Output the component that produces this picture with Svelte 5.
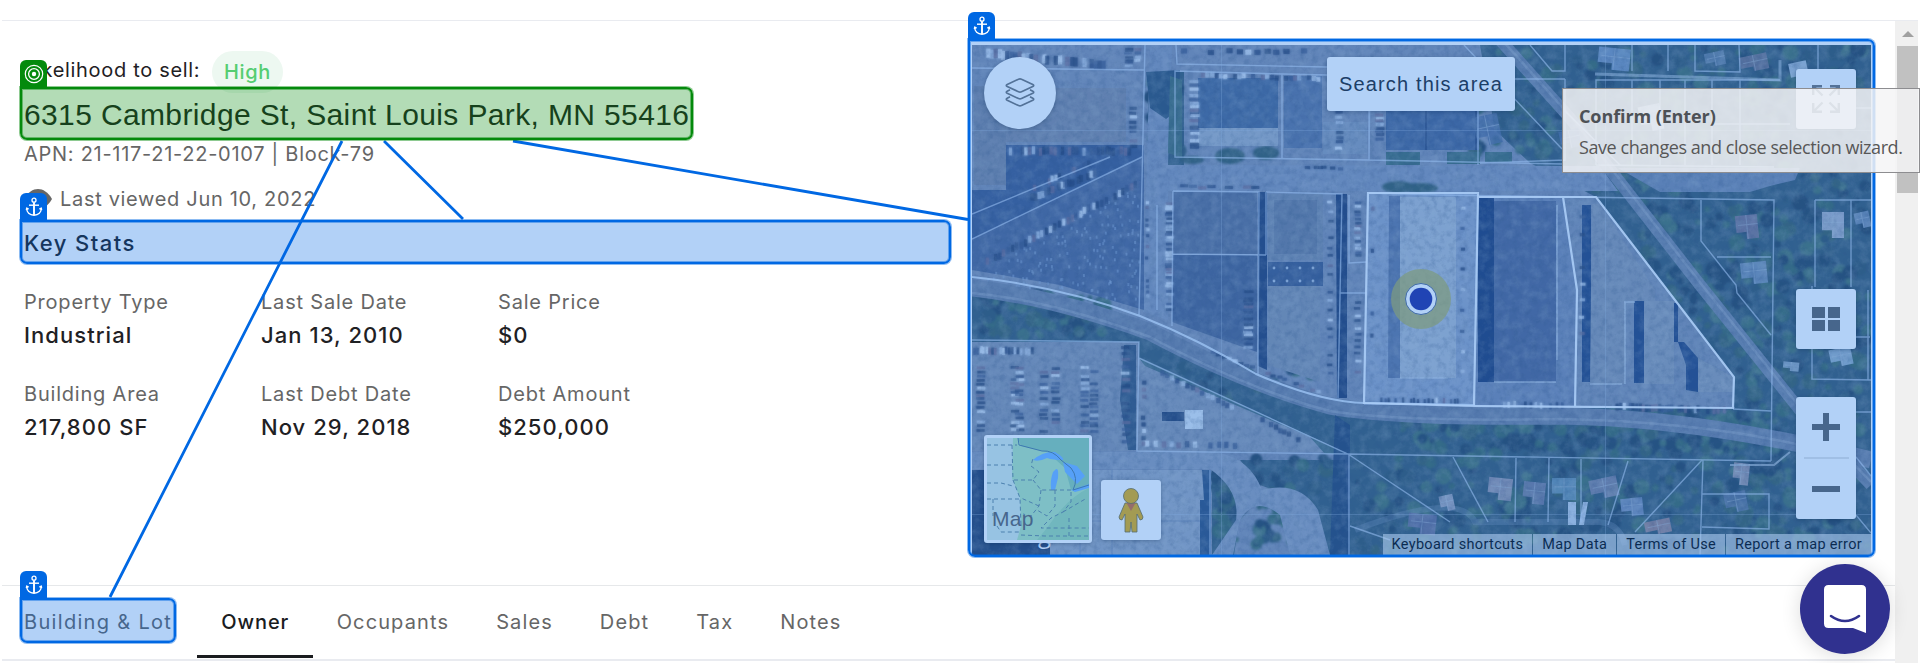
<script>
  const stats = [
    { label: 'Property Type', value: 'Industrial' },
    { label: 'Last Sale Date', value: 'Jan 13, 2010' },
    { label: 'Sale Price', value: '$0' },
    { label: 'Building Area', value: '217,800 SF' },
    { label: 'Last Debt Date', value: 'Nov 29, 2018' },
    { label: 'Debt Amount', value: '$250,000' },
  ];
  const tabs = ['Building & Lot', 'Owner', 'Occupants', 'Sales', 'Debt', 'Tax', 'Notes'];
  const credits = ['Keyboard shortcuts', 'Map Data', 'Terms of Use', 'Report a map error'];

  const selections = [
    { kind: 'target', x: 20, y: 87, w: 673, h: 53 },
    { kind: 'anchor', x: 20, y: 220, w: 931, h: 44 },
    { kind: 'anchor', x: 968, y: 39, w: 907, h: 518 },
    { kind: 'anchor', x: 20, y: 598, w: 156, h: 45 },
  ];

  // Small seeded generator so the scattered cars, trees and roofs stay put between renders.
  let seed = 7;
  const rnd = () => {
    seed = (seed * 16807) % 2147483647;
    return seed / 2147483647;
  };
  const carFill = ['#dfe6ee', '#2b3a5e', '#36446a', '#b9c4d6', '#43527a', '#2c3a5c', '#7c6680'];
  function carRow(x1, y1, x2, y2, n, w = 3, h = 6) {
    return Array.from({ length: n }, (_, i) => {
      const t = i / n;
      return {
        x: x1 + (x2 - x1) * t + rnd() * 1.5,
        y: y1 + (y2 - y1) * t + rnd() * 2,
        w, h,
        f: carFill[Math.floor(rnd() * carFill.length)],
      };
    }).filter(() => rnd() > 0.2);
  }
  const cars = [
    ...carRow(1005, 146, 1130, 146, 34, 3, 8),
    ...carRow(976, 262, 1138, 178, 38, 3, 7),
    ...carRow(1030, 193, 1095, 168, 20, 4, 7),
    ...carRow(1032, 183, 1090, 158, 16, 3, 6),
    ...carRow(1129, 105, 1129, 148, 9, 7, 3),
    ...carRow(1124, 47, 1124, 66, 7, 8, 2),
    ...carRow(1134, 47, 1134, 66, 5, 6, 3),
    ...carRow(1189, 80, 1189, 148, 20, 9, 3),
    ...carRow(1335, 105, 1335, 150, 9, 7, 3),
    ...carRow(1375, 112, 1375, 150, 11, 8, 3),
    ...carRow(1200, 72, 1320, 75, 26, 4, 5),
    ...carRow(1180, 184, 1260, 186, 9, 8, 3),
    ...carRow(1300, 164, 1350, 166, 12, 5, 3),
    ...carRow(1165, 196, 1165, 310, 40, 7, 2.5),
    ...carRow(1145, 200, 1145, 300, 18, 3, 3),
    ...carRow(1327, 200, 1327, 380, 20, 5, 2.5),
    ...carRow(1243, 290, 1243, 348, 20, 9, 2.5),
    ...carRow(1354, 200, 1354, 260, 18, 6, 2.5),
    ...carRow(1354, 300, 1354, 390, 14, 6, 2.5),
    ...carRow(1370, 205, 1370, 395, 9, 3, 4),
    ...carRow(1380, 397, 1460, 398, 22, 2, 6),
    ...carRow(1497, 400, 1570, 402, 14, 2.5, 6),
    ...carRow(1615, 402, 1725, 406, 34, 3, 7),
    ...carRow(1579, 215, 1579, 380, 10, 5, 3),
    ...carRow(1460, 205, 1460, 390, 9, 4, 3),
    ...carRow(973, 346, 1036, 347, 22, 2.5, 7),
    ...[976, 1010, 1015, 1039, 1051, 1080, 1089].flatMap((x) => carRow(x, 366, x, 432, 17, 8, 2.6)),
    ...carRow(1121, 345, 1121, 445, 16, 8, 3),
    ...carRow(1141, 380, 1141, 448, 10, 4, 4),
    ...carRow(1160, 370, 1235, 407, 15, 4, 5),
    ...carRow(1260, 417, 1300, 438, 9, 4, 5),
    ...carRow(1145, 440, 1240, 442, 12, 4, 6),
    ...carRow(1210, 350, 1320, 392, 20, 5, 3),
    ...carRow(985, 48, 1105, 60, 30, 4, 9),
    ...carRow(1180, 48, 1310, 48, 14, 6, 5),
  ];
  const flecks = Array.from({ length: 230 }, () => ({
    x: 985 + rnd() * 160,
    y: 190 + rnd() * 110,
  })).filter((d) => d.y > 265 - (d.x - 972) * 0.48 && d.y < 278 + (d.x - 972) * 0.15 && d.x < 1139);

  const canopyZones = [
    [1570, 45, 300, 150, 210], [1640, 200, 230, 180, 260], [1470, 45, 90, 110, 40],
    [1400, 412, 370, 44, 190], [1355, 458, 515, 92, 220], [1215, 456, 130, 90, 40],
    [975, 294, 130, 42, 70], [1150, 75, 30, 80, 24], [1740, 380, 120, 160, 90],
    [1210, 470, 30, 75, 20], [1255, 500, 40, 50, 18], [1180, 365, 150, 40, 18],
  ];
  const canopy = canopyZones.flatMap(([x, y, w, h, n]) =>
    Array.from({ length: n }, () => ({
      x: x + rnd() * w,
      y: y + rnd() * h,
      r: 2.5 + rnd() * 6,
      f: ['#2f4759', '#41685a', '#385560', '#496f60', '#2f4557', '#3f6058'][Math.floor(rnd() * 6)],
    }))
  );
  const houses = [
    [1598, 48, 32, 22, '#7f96ba'], [1740, 55, 28, 16, '#7d7282'], [1705, 52, 20, 14, '#6f8299'],
    [1790, 62, 18, 20, '#b4c2d2'], [1640, 105, 22, 26, '#a6b2c2'], [1736, 215, 22, 24, '#87738a'],
    [1741, 262, 26, 22, '#7f92ae'], [1822, 212, 22, 26, '#b5b4c4'], [1855, 212, 15, 16, '#7d90ac'],
    [1830, 348, 22, 18, '#9fb4c8'], [1488, 478, 24, 22, '#a898a4'], [1523, 482, 22, 22, '#7f7c98'],
    [1552, 478, 24, 22, '#6f94aa'], [1590, 478, 28, 20, '#8a8398'], [1621, 498, 22, 18, '#8391b4'],
    [1645, 520, 26, 14, '#aa8284'], [1733, 463, 16, 22, '#ab98a0'], [1440, 495, 14, 16, '#b0a8b4'],
    [1725, 492, 22, 20, '#61718f'], [1408, 514, 28, 20, '#756f94'], [1783, 362, 16, 9, '#97a9ba'],
    [1475, 115, 25, 30, '#566b93'], [1560, 130, 20, 18, '#566b93'],
  ];
</script>

{#snippet anchor()}
  <svg class="mark" viewBox="0 0 20 20" fill="none" stroke="#fff">
    <circle cx="10" cy="3.2" r="2" stroke-width="1.3" />
    <path d="M10 5.2V18" stroke-width="1.9" />
    <path d="M5 8.2H15" stroke-width="1.4" />
    <path d="M2.7 11.4C2.6 15.4 5.6 18.1 10 18.2C14.4 18.1 17.4 15.4 17.3 11.4M2.4 13.2L2.7 11.2L4.6 12M17.6 13.2L17.3 11.2L15.4 12" stroke-width="1.4" />
  </svg>
{/snippet}

{#snippet target()}
  <svg class="mark" viewBox="0 0 20 20" fill="none" stroke="#fff">
    <circle cx="10" cy="10" r="8.7" stroke-width="1.2" />
    <circle cx="10" cy="10" r="5.4" stroke-width="1.3" />
    <circle cx="10" cy="10" r="2.200" fill="#fff" stroke="none" />
  </svg>
{/snippet}

<div class="page">
  <div class="body">
    <main>
      <div class="top">
        <section class="summary">
          <div class="likely"><span>Likelihood to sell:</span><b>High</b></div>
          <h1>6315 Cambridge St, Saint Louis Park, MN 55416</h1>
          <div class="apn">APN: 21-117-21-22-0107 | Block-79</div>
          <div class="viewed">
            <svg width="28" height="20" viewBox="0 0 28 20">
              <path d="M0 10C4 3 9 0 14 0S24 3 28 10C24 17 19 20 14 20S4 17 0 10Z" fill="#666" />
              <circle cx="12" cy="10" r="5" fill="#fff" />
            </svg>
            <span>Last viewed Jun 10, 2022</span>
          </div>
          <h2>Key Stats</h2>
          <dl>
            {#each stats as s}
              <div><dt>{s.label}</dt><dd>{s.value}</dd></div>
            {/each}
          </dl>
        </section>

        <section class="map">
          <svg class="aerial" viewBox="972 45 899 510" preserveAspectRatio="none">
            <defs>
              <filter id="grain" x="0" y="0" width="100%" height="100%">
                <feTurbulence type="fractalNoise" baseFrequency="0.16" numOctaves="4" seed="4" />
                <feColorMatrix values="0 0 0 0 0.04  0 0 0 0 0.07  0 0 0 0 0.14  1.8 0 0 0 -0.75" />
              </filter>
              <filter id="light" x="0" y="0" width="100%" height="100%">
                <feTurbulence type="fractalNoise" baseFrequency="0.1" numOctaves="5" seed="11" />
                <feColorMatrix values="0 0 0 0 0.5  0 0 0 0 0.53  0 0 0 0 0.52  0 1.8 0 0 -0.72" />
              </filter>
              <filter id="soft"><feGaussianBlur stdDeviation="0.9" /></filter>
            </defs>
            <g class="ground">
              <rect x="972" y="45" width="899" height="510" fill="#8189a1" />

              <!-- wooded and residential ground -->
              <g fill="#3e5a69">
                <path d="M1480 45H1871V555H1349V454L1240 404L1139 358V320L1250 380L1365 408H1735L1596 197L1530 163L1495 130Z" />
                <path d="M972 290L1060 300L1139 335V342H972Z" />
                <path d="M1148 72H1184V168H1168L1160 116H1148Z" />
                <path d="M1212 470Q1238 480 1240 515L1234 555H1212Z" />
                <path d="M1240 460H1345L1350 555H1330L1300 500L1260 485Z" />
                <path d="M972 470H1050V555H972Z" fill="#2c4066" />
              </g>
              <g filter="url(#soft)">
                {#each canopy as c}<circle cx={c.x} cy={c.y} r={c.r} fill={c.f} />{/each}
              </g>

              <!-- streets -->
              <path d="M1150 45H1172L1168 165L1600 166L1618 191H1168V320L1143 312Z" fill="#838da8" />
              <path d="M1618 168H1800L1795 180L1770 186L1750 192H1660Z" fill="#76839f" />
              <path d="M1146 72L1180 70L1178 110L1166 119L1150 108Z" fill="#34506a" />
              <path d="M1170 76L1182 80V158L1168 153Z" fill="#456a64" />
              <path d="M972 452H1215Q1250 458 1262 490Q1300 480 1318 510L1330 555H1290L1280 515Q1255 495 1240 520L1233 555H1212L1236 520Q1240 490 1210 469H972Z" fill="#8b94aa" />
              <path d="M1355 530Q1460 490 1475 522H1600Q1620 524 1625 545" fill="none" stroke="#8595ad" stroke-width="6" opacity=".35" />
              <g filter="url(#soft)" fill="#3c5c5a">
                <ellipse cx="1398" cy="187" rx="16" ry="6" /><ellipse cx="1420" cy="188" rx="18" ry="5" />
                <ellipse cx="1230" cy="156" rx="15" ry="8" /><ellipse cx="1266" cy="153" rx="13" ry="7" /><ellipse cx="1192" cy="160" rx="12" ry="4" />
              </g>

              <!-- railway -->
              <path d="M972 288Q1050 296 1150 332Q1250 385 1330 406Q1400 418 1560 416Q1700 418 1871 460" fill="none" stroke="#727c94" stroke-width="17" />
              <path d="M1500 40L1570 118L1640 208L1700 285L1800 410L1871 485" fill="none" stroke="#747f96" stroke-width="12" />
              <path d="M1502 40L1572 118L1642 208L1702 285L1802 410L1871 482M972 293Q1050 300 1150 337Q1250 390 1330 411Q1400 422 1560 419Q1700 422 1800 445" fill="none" stroke="#989fae" stroke-width="2.500" opacity=".6" />

              <!-- yards and roofs, west side -->
              <path d="M972 214L1110 157L1144 145V310L1060 285L972 270Z" fill="#53628a" />
              <path d="M1006 145H1142V157L972 239V190H1006Z" fill="#435785" />
              <path d="M974 86H1006V185H974Z" fill="#7c8092" />
              <rect x="1006" y="88" width="120" height="54" fill="#808394" />
              <rect x="1198" y="78" width="80" height="50" fill="#4e658c" />
              <path d="M1198 128H1278V146H1198Z" fill="#9aa3b2" />
              <rect x="1284" y="76" width="38" height="72" fill="#5f7095" />
              <rect x="1323" y="122" width="44" height="32" fill="#8792a8" />
              <rect x="1386" y="108" width="93" height="42" fill="#4d628c" />
              <path d="M1426 108V150M1476 108V150" stroke="#3a4d78" stroke-width="2" />
              <path d="M1386 152H1420V165H1386ZM1447 152H1480V164H1447ZM1485 152H1512V162H1485Z" fill="#446a66" />
              <rect x="1173" y="192" width="84" height="62" fill="#616c8a" />
              <path d="M1172 255H1257V352L1172 322Z" fill="#505f84" />
              <path d="M1258 192H1267V370L1258 366Z" fill="#2c406c" />
              <rect x="1268" y="194" width="55" height="66" fill="#7c8598" />
              <rect x="1274" y="200" width="43" height="54" fill="#6d778e" />
              <rect x="1268" y="262" width="55" height="24" fill="#445781" />
              <path d="M1268 286H1320V382L1268 365Z" fill="#838b9c" />
              <path d="M1336 194H1347V398H1337Z" fill="#2a3e6a" />
              {#each [0, 1, 2, 3] as i}
                <circle cx={1274 + i * 13} cy="268" r="1.4" fill="#a9b6cb" /><circle cx={1274 + i * 13} cy="281" r="1.4" fill="#a9b6cb" />
              {/each}

              <!-- highlighted parcels -->
              <path d="M1368 193H1478V405H1364Z" fill="#8f9bb7" />
              <path d="M1389 196H1400V378H1388Z" fill="#647398" />
              <rect x="1400" y="197" width="56" height="181" fill="#a6afbe" />
              <path d="M1478 197H1563L1577 290L1575 406H1474Z" fill="#7682a2" />
              <rect x="1478" y="198" width="16" height="184" fill="#263d70" />
              <rect x="1494" y="201" width="62" height="181" fill="#55628a" />
              <path d="M1563 197H1596L1734 377V408H1575L1577 290Z" fill="#8089a0" />
              <path d="M1582 205H1591V382H1582ZM1634 301H1644V383H1634ZM1674 303H1678V342H1674ZM1678 342H1684L1698 358V392L1686 390V365Z" fill="#2b4478" />
              <path d="M1592 204H1600L1655 290V301H1625V384H1590Z" fill="#878e9f" />
              <path d="M1644 301H1674V384H1644ZM1698 358L1733 377V392H1698Z" fill="#8c93a2" />
              <path d="M1557 205V360M1625 302V384M1590 384H1622M1635 302H1624M1494 382H1556M1400 378H1448" stroke="#b7c1cf" stroke-width="1.500" fill="none" opacity=".8" />

              <!-- south-west yards -->
              <path d="M972 342H1139V451H972Z" fill="#858c9f" />
              <path d="M1124 345H1136V450H1128L1120 400Z" fill="#3d5470" />
              <path d="M1139 358L1310 437L1325 452H1138Z" fill="#888fa1" />
              <path d="M1139 358L1348 454H1325L1310 437L1145 366Z" fill="#4a6a70" />
              <rect x="1185" y="410" width="18" height="19" fill="#ced6df" />
              <rect x="1162" y="412" width="22" height="9" fill="#2d4066" />
              <rect x="1050" y="470" width="158" height="85" fill="#979fb0" />
              <path d="M1080 470V555M1112 470V555M1050 521H1200" stroke="#7a88a6" />
              <path d="M1202 470H1211V555H1200V500H1204Z" fill="#33507a" />
              <path d="M1335 415L1350 425V555H1330Z" fill="#29426a" opacity=".85" />
              {#each houses as [x, y, w, h, f]}
                <g opacity=".85" transform={`rotate(${(x % 5) * 6 - 12} ${x + w / 2} ${y + h / 2})`}>
                  <path d={`M${x} ${y}H${x + w}V${y + h}H${x + w * 0.45}V${y + h * 0.7}H${x}Z`} fill={f} />
                  <path d={`M${x + w * 0.1} ${y + h * 0.4}H${x + w}M${x + w * 0.5} ${y}V${y + h}`} stroke="#c6cfdb" stroke-width=".8" opacity=".5" />
                </g>
              {/each}
              <path d="M1568 502H1576V525H1568ZM1583 502L1588 502L1584 525H1579Z" fill="#b9c5d3" />
              <path d="M1595 74L1780 80V60" stroke="#b3bfcb" stroke-width="3" fill="none" opacity=".6" />
              <path d="M1790 452L1774 465H1730" stroke="#b3bfcb" stroke-width="2" fill="none" opacity=".7" />

              {#each flecks as d}<rect x={d.x} y={d.y} width="2" height="3" fill="#8fa3c6" opacity=".5" />{/each}
              <g filter="url(#soft)" opacity=".55">{#each cars as c}<rect x={c.x - 0.5} y={c.y} width={c.w + 1} height={c.h} fill={c.f} />{/each}</g>
              {#each cars as c}<rect x={c.x} y={c.y} width={c.w} height={c.h} fill={c.f} opacity=".5" />{/each}

              <rect x="972" y="45" width="899" height="510" filter="url(#grain)" opacity=".32" />
              <rect x="972" y="45" width="899" height="510" filter="url(#light)" opacity=".26" />
            </g>

            <!-- parcel boundaries -->
            <g fill="none" stroke="#cfdcf0" stroke-width="1.400" opacity=".62">
              <path d="M972 68L1144 70M1145 45L1139 315M972 239L1142 157M972 214L1110 157M1157 205V310" />
              <path d="M1176 45L1177 64L1327 67M1175 71L1283 74L1370 76L1369 160L1175 157ZM1282 74V158M1369 110V160L1562 164" />
              <path d="M1173 191L1259 192L1258 374M1173 191L1172 326M1172 254L1266 255M1266 192L1342 194L1338 398M1266 192V255M1349 195V263L1367 262M1340 293H1367" />
              <path d="M972 340L1139 342L1137 451L1348 454L1771 461M1139 358L1348 454L1450 522M1349 454V555M1350 526L1390 540" />
              <path d="M1453 457L1488 522M1516 458L1515 522M1549 458L1548 522M1581 459V522M1628 461L1608 525M1702 460L1635 532M1703 460L1700 555M1702 494H1769V529L1702 527M1210 470V555" />
              <path d="M1464 45L1510 94L1562 149M1530 45L1552 71H1565V45M1565 79H1515M1565 79V160L1480 163M1478 60V165" />
              <path d="M1632 45V71M1668 45V71M1695 45V71L1740 72L1739 45M1818 45V72M1596 165V80H1780M1632 80V165M1660 80V165M1685 80V165M1712 80V165M1740 80V165M1596 165L1774 167M1712 124H1790M1565 111L1620 165M1856 108H1871" />
              <path d="M1368 193L1440 195L1774 200L1771 461M1701 200V241L1736 285L1737 293L1771 335M1717 257H1771M1733 409L1771 411M1815 200V287M1851 200V287M1815 200H1871M1812 286V379L1871 380M1868 290V380M1856 337H1870M1856 412H1871M1856 457L1871 476M1856 515L1871 533" />
            </g>
            <path d="M972 277Q1060 286 1140 316Q1200 340 1256 374Q1320 402 1365 403L1475 405" fill="none" stroke="#dbe6f6" stroke-width="2" opacity=".85" />
            <path d="M1368 193H1478V197H1596L1734 377L1733 408L1475 406L1364 403ZM1478 197L1474 405M1563 197L1577 290L1575 407" fill="none" stroke="#f1f6fd" stroke-width="2.200" opacity=".92" />
            <path d="M972 130.500H1871M972 514.500H1871M1221.500 45V555M1605.500 45V555" stroke="#b8c8de" stroke-width="1" opacity=".3" />

            <!-- current property -->
            <circle cx="1421" cy="299" r="30" fill="#b4b155" opacity=".72" />
            <circle cx="1421" cy="299" r="15.500" fill="#fff" stroke="#5b6c8c" stroke-width="1" />
            <circle cx="1421" cy="299" r="11.300" fill="#2f35a0" />
          </svg>

          <div class="ctl layers">
            <svg width="32" height="32" viewBox="0 0 32 32" fill="none" stroke="#777" stroke-width="1.700" stroke-linejoin="round">
              <path d="M14.500 2.200Q16 1.500 17.500 2.200L28.800 7.400Q30.600 8.400 28.800 9.400L17.500 14.800Q16 15.500 14.500 14.800L3.200 9.400Q1.400 8.400 3.200 7.400Z" />
              <path d="M6 12.700L3.200 14.200Q1.400 15.200 3.200 16.200L14.500 21.600Q16 22.300 17.500 21.600L28.800 16.200Q30.600 15.200 28.800 14.200L26 12.700" />
              <path d="M6 19.700L3.200 21.200Q1.400 22.200 3.200 23.200L14.500 28.600Q16 29.300 17.500 28.600L28.800 23.200Q30.600 22.200 28.800 21.200L26 19.700" />
            </svg>
          </div>
          <div class="ctl search">Search this area</div>
          <div class="ctl full">
            <svg width="28" height="28" viewBox="0 0 28 28" fill="none" stroke="#777" stroke-width="2.400">
              <path d="M1.200 10V1.200H10M2 2L10.500 10.500M18 1.200H26.800V10M26 2L17.500 10.500M1.200 18V26.800H10M2 26L10.500 17.500M26.800 18V26.800H18M26 26L17.500 17.500" />
            </svg>
          </div>
          <div class="ctl tiles"><i></i><i></i><i></i><i></i></div>
          <div class="ctl zoom">
            <svg width="28" height="28" viewBox="0 0 28 28"><path d="M11 0H17V11H28V17H17V28H11V17H0V11H11Z" fill="#666" /></svg>
            <hr />
            <svg width="28" height="28" viewBox="0 0 28 28"><path d="M0 11H28V17H0Z" fill="#666" /></svg>
          </div>
          <span class="logo">g</span>
          <div class="ctl thumb">
            <svg viewBox="0 0 102 102">
              <rect width="102" height="102" fill="#b5e6b9" />
              <path d="M0 0H26L25 40L33 60L34 88L30 102H0Z" fill="#d8ebe2" />
              <path d="M31 0H102V48L84 52L78 30L60 14L34 8Z" fill="#93cfae" />
              <path d="M46 22Q56 13 68 14Q78 20 76 22Q66 22 60 20Q52 24 46 22ZM68 32Q72 28 71 40L68 52H64Q63 42 66 34ZM76 24L90 28L98 38L90 46Q84 40 78 34ZM84 52L102 46V50L88 54Z" fill="#7cb9ff" />
              <path d="M60 90Q80 60 102 50V102H50Z" fill="#a2daae" />
              <path d="M31 0L32 7L55 13Q66 12 74 22L84 30Q92 40 86 52L102 47" fill="none" stroke="#57809b" stroke-width="1" />
              <path d="M0 7H30M0 27H25M0 45H14L26 48M0 61H32M25 7L26 42L33 60L34 88M27 42H46L52 34L44 28L46 20M46 42L54 52L66 52M54 52L52 68L44 78L36 76M66 52H84M68 52V68L60 78L50 72M84 54V64L76 74L64 80L54 90H102M52 68L34 60M76 74L100 60M10 88L14 94H32M34 97L58 98H102M6 61V78M82 80V100" fill="none" stroke="#6c8c98" stroke-width="1" stroke-dasharray="4 3" />
            </svg>
            <span>Map</span>
          </div>
          <div class="ctl peg">
            <svg width="26" height="45" viewBox="0 0 26 45">
              <path d="M7 15L1 29Q1 32 4 32L7 26V44H12L13 34L14 44H19V26L22 32Q25 32 25 29L19 15Z" fill="#eab215" stroke="#7a7040" stroke-width=".8" />
              <path d="M8.500 15L13 23L17.500 15Z" fill="#d4703a" />
              <circle cx="13" cy="8" r="7.500" fill="#eab215" stroke="#7a7040" stroke-width=".8" />
            </svg>
          </div>
          <div class="credits">{#each credits as c}<span>{c}</span>{/each}</div>
        </section>
      </div>

      <nav>{#each tabs as t}<a class:on={t === 'Owner'} href="#tab"><span>{t}</span></a>{/each}</nav>
    </main>
    <aside class="bar"><i class="up"></i><i class="grip"></i></aside>
  </div>

  <div class="wizard">
    <svg class="links" width="1920" height="663" stroke="#0068e3" stroke-width="2.800">
      <path d="M342 141L110 597M384 141L463 219M513 141L968 219.500" fill="none" />
    </svg>
    {#each selections as s}
      <div class="pick {s.kind}" style={`left:${s.x}px;top:${s.y}px;width:${s.w}px;height:${s.h}px`}>
        <div class="flag">{#if s.kind === 'target'}{@render target()}{:else}{@render anchor()}{/if}</div>
      </div>
    {/each}
    <div class="tip"><b>Confirm (Enter)</b><span>Save changes and close selection wizard.</span></div>
  </div>

  <div class="chat">
    <svg width="42" height="48" viewBox="0 0 42 48">
      <path d="M4.500 0H37.500Q42 0 42 4.500V48L29 43H4.500Q0 43 0 38.500V4.500Q0 0 4.500 0Z" fill="#fff" />
      <path d="M7 31Q21 41 35 31" fill="none" stroke="#30318f" stroke-width="2.600" stroke-linecap="round" />
    </svg>
  </div>
</div>

<style>
  :global(body) { margin: 0; background: #fff; overflow: hidden; }
  * { box-sizing: border-box; }
  .page { position: relative; width: 1920px; height: 663px; padding-top: 20px; font: 400 20px/28px Inter, sans-serif; color: #1f2124; overflow: hidden; }
  .body { display: grid; grid-template-columns: 1893px 23px; margin-left: 2px; width: 1916px; height: 643px; border-top: 1px solid #e9ebf0; }
  main { display: flex; flex-direction: column; background: #fff; }
  .top { display: grid; grid-template-columns: 970px 899px; height: 565px; padding-top: 24px; border-bottom: 1px solid #e6e8ea; }
  .summary { padding-left: 22px; }
  .likely { display: flex; align-items: center; height: 42px; margin-top: 6px; letter-spacing: .68px; }
  .likely > span { width: 188px; white-space: nowrap; margin-top: -5px; }
  .likely b { width: 71px; height: 42px; line-height: 42px; border-radius: 21px; text-align: center; font-weight: 500; background: #edf8f1; color: #55cd72; letter-spacing: .6px; }
  h1 { margin: 0; height: 44px; padding-top: 4px; font: 400 30px/36px "Liberation Sans", Arial, sans-serif; letter-spacing: .37px; white-space: nowrap; }
  .apn { margin-top: 3px; color: #666; letter-spacing: .72px; }
  .viewed { display: flex; align-items: center; gap: 8px; margin-top: 17px; color: #666; letter-spacing: .68px; }
  h2 { margin: 14px 0 0; font: 500 22px/32px Inter, sans-serif; letter-spacing: 1.45px; }
  dl { display: grid; grid-template-columns: repeat(3, 237px); row-gap: 28px; margin: 28px 0 0; }
  dt { line-height: 30px; color: #666; letter-spacing: .8px; }
  dd { margin: 2px 0 0; font-size: 22px; font-weight: 500; line-height: 32px; letter-spacing: 1.05px; }
  nav { display: flex; height: 75px; border-bottom: 2px solid #e9ebf0; }
  nav a { display: flex; align-items: center; height: 72px; padding: 0 23.500px; color: #666; text-decoration: none; letter-spacing: 1.12px; white-space: nowrap; border-bottom: 3px solid transparent; }
  nav a:first-child { padding: 0 24.500px 0 22px; letter-spacing: 1.32px; }
  nav a.on { padding: 0 24px 0 24.500px; color: #1a1c1f; font-weight: 500; border-color: #1a1c1f; letter-spacing: .9px; }
  nav a span { margin-top: 3px; }
  .bar { background: #f0f0f0; display: flex; flex-direction: column; align-items: center; padding: 10px 0 0 2px; }
  .up { border: 6px solid transparent; border-top: 0; border-bottom-color: #a0a0a0; }
  .grip { width: 21px; height: 147px; margin-top: 9px; background: #c1c1c1; }

  .map { position: relative; height: 510px; overflow: hidden; }
  .aerial { display: block; width: 899px; height: 510px; }
  .ground { filter: saturate(.8) brightness(1.07); }
  .ctl { position: absolute; display: flex; align-items: center; justify-content: center; background: #fff; border-radius: 3px; box-shadow: 0 1px 4px rgba(0, 0, 0, .3); }
  .layers { left: 12px; top: 12px; width: 72px; height: 72px; border-radius: 50%; }
  .search { left: 355px; top: 12px; width: 188px; height: 54px; font: 400 20px/54px "Liberation Sans", Arial, sans-serif; color: #2b2d30; letter-spacing: 1.15px; white-space: nowrap; }
  .full { left: 824px; top: 24px; width: 60px; height: 60px; }
  .tiles { left: 824px; top: 244px; width: 60px; height: 60px; display: grid; grid-template-columns: 12.500px 12.500px; grid-auto-rows: 11px; gap: 2px 3px; align-content: center; align-items: stretch; }
  .tiles i { background: #666; }
  .zoom { left: 824px; top: 352px; width: 60px; height: 122px; flex-direction: column; gap: 16px; }
  .zoom hr { width: 45px; margin: 0; border: 0; border-top: 2px solid #e6e6e6; }
  .logo { position: absolute; left: 66px; top: 475px; font: 500 24px/28px "Open Sans", sans-serif; color: #fff; }
  .thumb { left: 12px; top: 390px; width: 108px; height: 108px; padding: 3px; }
  .thumb svg { width: 102px; height: 102px; }
  .thumb span { position: absolute; left: 8px; bottom: 11px; font: 400 21px/26px "Liberation Sans", sans-serif; color: #666; letter-spacing: .3px; }
  .peg { left: 129px; top: 435px; width: 60px; height: 60px; }
  .credits { position: absolute; right: 0; bottom: 0; display: flex; gap: 1px; font: 400 14.500px/21px Roboto, sans-serif; color: #111; white-space: nowrap; letter-spacing: .33px; }
  .credits span { padding: 0 9px; background: rgba(245, 245, 245, .6); }

  .wizard { position: absolute; inset: 0; }
  .links { position: absolute; inset: 0; }
  .pick { position: absolute; --c: #0068e3; --h: rgba(0, 104, 227, .45); border: 2px solid var(--c); border-radius: 0 7px 7px 7px; background: rgba(0, 104, 227, .3); box-shadow: 0 0 0 1px var(--h), inset 0 0 0 1px var(--h); }
  .target { --c: #048a0c; --h: rgba(4, 138, 12, .45); background: rgba(4, 138, 12, .3); }
  .flag { position: absolute; left: -2px; top: -29px; width: 27px; height: 27px; display: flex; align-items: center; justify-content: center; background: var(--c); border-radius: 6px 6px 0 0; }
  .mark { width: 20px; height: 20px; }
  .tip { position: absolute; left: 1562px; top: 88px; width: 358px; height: 85px; padding: 12px 0 0 16px; display: flex; flex-direction: column; gap: 1px; background: rgba(244, 244, 246, .85); border: 1px solid #8d8d90; font: 400 18px/30px "Open Sans", "Noto Sans", sans-serif; color: #575757; white-space: nowrap; letter-spacing: -.44px; }
  .tip b { font-weight: 700; color: #4d5156; letter-spacing: -.1px; }
  .chat { position: absolute; left: 1800px; top: 564px; width: 90px; height: 90px; display: flex; align-items: center; justify-content: center; border-radius: 50%; background: #30318f; box-shadow: 0 2px 20px rgba(0, 0, 0, .14); }
</style>
